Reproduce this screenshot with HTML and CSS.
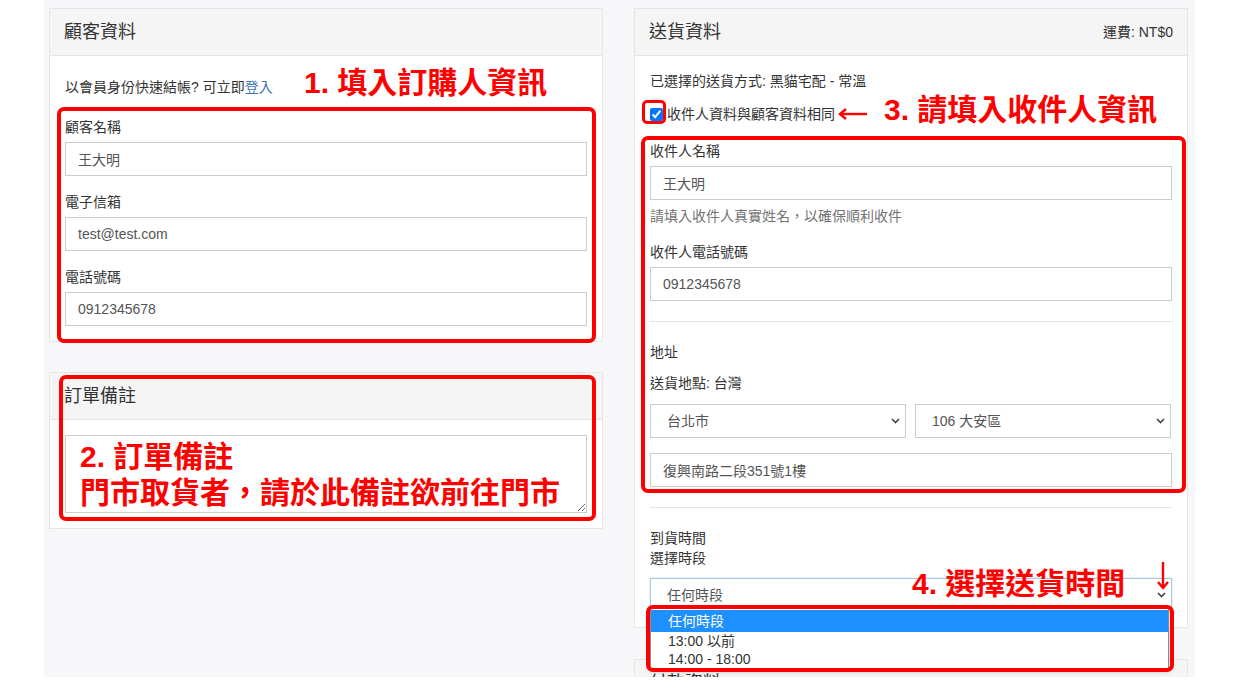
FILE: index.html
```html
<!DOCTYPE html>
<html lang="zh-TW">
<head>
    <meta charset="UTF-8">
    <meta name="viewport" content="width=device-width, initial-scale=1.0">
    <title>結帳 - 顧客與送貨資料</title>
    <link rel="stylesheet" href="styles.css">
</head>
<body>
    <div class="page">
        <div class="columns">
            <div class="col col-left">
                <div class="card">
                    <div class="card-head">
                        <span class="card-title">顧客資料</span>
                    </div>
                    <div class="card-body">
                        <p class="intro">以會員身份快速結帳? 可立即<a href="#">登入</a></p>
                        <div class="form-group">
                            <label for="name">顧客名稱</label>
                            <input type="text" id="name" class="field" value="王大明">
                        </div>
                        <div class="form-group">
                            <label for="email">電子信箱</label>
                            <input type="text" id="email" class="field" value="test@test.com">
                        </div>
                        <div class="form-group last">
                            <label for="phone">電話號碼</label>
                            <input type="text" id="phone" class="field" value="0912345678">
                        </div>
                    </div>
                </div>

                <div class="card">
                    <div class="card-head">
                        <span class="card-title">訂單備註</span>
                    </div>
                    <div class="card-body">
                        <textarea class="field note"></textarea>
                    </div>
                </div>
            </div>

            <div class="col">
                <div class="card">
                    <div class="card-head">
                        <span class="card-title">送貨資料</span>
                        <span class="fee">運費: NT$0</span>
                    </div>
                    <div class="card-body">
                        <p class="method">已選擇的送貨方式: 黑貓宅配 - 常溫</p>
                        <div class="check-row">
                            <input type="checkbox" id="same" checked>
                            <label for="same">收件人資料與顧客資料相同</label>
                        </div>
                        <div class="form-group">
                            <label for="rname">收件人名稱</label>
                            <input type="text" id="rname" class="field" value="王大明">
                            <p class="help">請填入收件人真實姓名，以確保順利收件</p>
                        </div>
                        <div class="form-group last">
                            <label for="rphone">收件人電話號碼</label>
                            <input type="text" id="rphone" class="field" value="0912345678">
                        </div>
                        <hr>
                        <p class="addr-title">地址</p>
                        <p class="addr-country">送貨地點: 台灣</p>
                        <div class="addr-selects">
                            <div class="select-wrap">
                                <select class="field select">
                                    <option>台北市</option>
                                </select>
                                <svg width="9" height="6" viewBox="0 0 9 6"><polyline points="1,1 4.5,4.5 8,1" fill="none" stroke="#444" stroke-width="1.6"/></svg>
                            </div>
                            <div class="select-wrap">
                                <select class="field select">
                                    <option>106 大安區</option>
                                </select>
                                <svg width="9" height="6" viewBox="0 0 9 6"><polyline points="1,1 4.5,4.5 8,1" fill="none" stroke="#444" stroke-width="1.6"/></svg>
                            </div>
                        </div>
                        <input type="text" class="field" value="復興南路二段351號1樓">
                        <hr>
                        <p class="time-label">到貨時間<br>選擇時段</p>
                        <div class="select-wrap">
                            <select class="field select focused">
                                <option>任何時段</option>
                                <option>13:00 以前</option>
                                <option>14:00 - 18:00</option>
                            </select>
                            <svg width="9" height="6" viewBox="0 0 9 6"><polyline points="1,1 4.5,4.5 8,1" fill="none" stroke="#444" stroke-width="1.6"/></svg>
                            <div class="time-list">
                                <div class="opt sel">任何時段</div>
                                <div class="opt">13:00 以前</div>
                                <div class="opt">14:00 - 18:00</div>
                            </div>
                        </div>
                    </div>
                </div>

                <div class="card">
                    <div class="card-head">
                        <span class="card-title">付款資料</span>
                    </div>
                    <div class="card-body">
                        <p class="method">付款方式</p>
                    </div>
                </div>
            </div>
        </div>

        <!-- annotations drawn over the screenshot -->
        <div class="mark mark-customer"></div>
        <div class="mark mark-note"></div>
        <div class="mark mark-check"></div>
        <div class="mark mark-receiver"></div>
        <div class="mark mark-time"></div>

        <div class="callout callout-1">1. 填入訂購人資訊</div>
        <div class="callout callout-2">2. 訂單備註<br>門市取貨者，請於此備註欲前往門市</div>
        <svg class="arrow-left" width="30" height="14" viewBox="0 0 30 14"><line x1="2" y1="7" x2="29" y2="7" stroke="#f00" stroke-width="2.4"/><polyline points="8,2 2,7 8,12" fill="none" stroke="#f00" stroke-width="2.4"/></svg>
        <div class="callout callout-3">3. 請填入收件人資訊</div>
        <div class="callout callout-4">4. 選擇送貨時間</div>
        <svg class="arrow-down" width="14" height="28" viewBox="0 0 14 28"><line x1="7" y1="0" x2="7" y2="26" stroke="#f00" stroke-width="2.4"/><polyline points="2,20 7,26 12,20" fill="none" stroke="#f00" stroke-width="2.4"/></svg>
    </div>
</body>
</html>
```

FILE: styles.css
```css
* {
    box-sizing: border-box;
}
body {
    margin: 0;
    background: #fff;
    font-family: "Liberation Sans", "Noto Sans CJK TC", sans-serif;
    font-size: 14px;
    line-height: 20px;
    color: #333;
}
p {
    margin: 0;
}
.page {
    position: relative;
    margin-left: 44px;
    width: 1151px;
    height: 677px;
    overflow: hidden;
    background: #f7f7f9;
    padding: 8px 7px 0 5px;
}
.columns {
    display: grid;
    grid-template-columns: 554px 554px;
    column-gap: 31px;
    align-items: start;
}
.col {
    display: flex;
    flex-direction: column;
    gap: 31px;
}
.col-left {
    gap: 30px;
}
.card {
    background: #fff;
    border: 1px solid #e6e6e6;
}
.card-head {
    display: flex;
    align-items: center;
    justify-content: space-between;
    height: 47px;
    padding: 0 14px 0 14px;
    background: #f5f5f5;
    border-bottom: 1px solid #e6e6e6;
}
.card-title {
    font-size: 18px;
    color: #333;
}
.fee {
    font-size: 14px;
    color: #333;
}
.card-body {
    padding: 15px;
}
.intro {
    margin: 6px 0 20px;
}
.intro a {
    color: #3a73b5;
    text-decoration: none;
}
.form-group {
    margin-bottom: 16px;
}
.form-group.last {
    margin-bottom: 0;
}
label {
    display: block;
    margin-bottom: 5px;
}
.field {
    display: block;
    width: 100%;
    height: 34px;
    padding: 6px 12px;
    border: 1px solid #ccc;
    border-radius: 0;
    background: #fff;
    font-family: inherit;
    font-size: 14px;
    color: #555;
}
.note {
    height: 78px;
}
.method {
    margin-bottom: 13px;
}
.check-row {
    display: flex;
    align-items: center;
    margin-bottom: 17px;
}
.check-row input {
    width: 13px;
    height: 13px;
    margin: 0 4px 0 0;
}
.check-row label {
    margin: 0;
}
.help {
    margin-top: 6px;
    color: #737373;
}
hr {
    margin: 20px 0;
    border: 0;
    border-top: 1px solid #e3e3e3;
}
.addr-title {
    margin-bottom: 11px;
}
.addr-country {
    margin-bottom: 11px;
}
.addr-selects {
    display: grid;
    grid-template-columns: 256px 256px;
    column-gap: 9px;
    margin-bottom: 15px;
}
.select-wrap {
    position: relative;
}
.select-wrap svg {
    position: absolute;
    right: 6px;
    top: 14px;
    pointer-events: none;
}
.select {
    appearance: none;
    -webkit-appearance: none;
    padding-left: 16px;
}
.select.focused {
    border-color: #a9c8e8;
    box-shadow: 0 0 2px rgba(102, 175, 233, 0.45);
}
.time-label {
    margin-bottom: 10px;
}
.time-list {
    position: absolute;
    left: 0;
    top: 30px;
    width: 519px;
    padding: 1px 0;
    background: #fff;
    border: 1px solid #8a8a8a;
    box-shadow: 0 2px 4px rgba(0, 0, 0, 0.2);
}
.opt {
    height: 18px;
    padding-left: 17px;
    line-height: 18px;
    color: #333;
}
.opt.sel {
    height: 22px;
    line-height: 22px;
    background: #1e90ff;
    color: #fff;
}

/* annotation overlay */
.mark {
    position: absolute;
    border: 4px solid #f00;
    border-radius: 7px;
}
.mark-customer {
    left: 13px;
    top: 107px;
    width: 539px;
    height: 236px;
}
.mark-note {
    left: 15px;
    top: 375px;
    width: 537px;
    height: 146px;
}
.mark-check {
    left: 598px;
    top: 100px;
    width: 24px;
    height: 24px;
    border-width: 3px;
    border-radius: 5px;
}
.mark-receiver {
    left: 597px;
    top: 136px;
    width: 545px;
    height: 357px;
}
.mark-time {
    left: 602px;
    top: 605px;
    width: 528px;
    height: 67px;
}
.callout {
    position: absolute;
    color: #f00;
    font-weight: bold;
    font-size: 30px;
    line-height: 30px;
    white-space: nowrap;
}
.callout-1 {
    left: 260px;
    top: 68px;
}
.callout-2 {
    left: 36px;
    top: 439px;
    line-height: 36px;
}
.callout-3 {
    left: 840px;
    top: 95px;
}
.callout-4 {
    left: 868px;
    top: 569px;
}
.arrow-left {
    position: absolute;
    left: 794px;
    top: 107px;
}
.arrow-down {
    position: absolute;
    left: 1112px;
    top: 562px;
}
```
